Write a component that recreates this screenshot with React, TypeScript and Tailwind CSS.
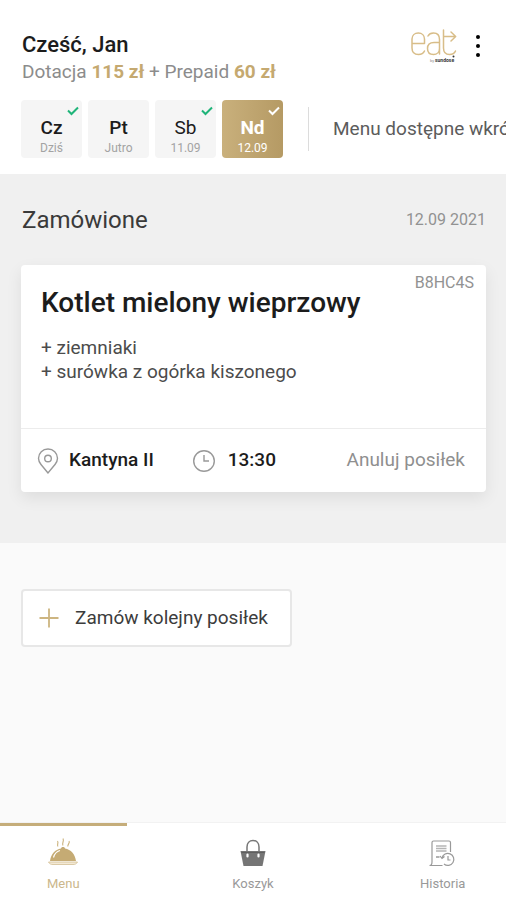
import { useState } from "react";
import clsx from "clsx";

const days = [
  { name: "Cz", date: "Dziś", ordered: true },
  { name: "Pt", date: "Jutro", ordered: false },
  { name: "Sb", date: "11.09", ordered: true },
  { name: "Nd", date: "12.09", ordered: true },
];

function Logo() {
  return (
    <svg viewBox="0 0 48 38" className="w-12 h-[38px]" fill="none" role="img" aria-label="eat">
      <g stroke="#d8bd88" strokeWidth="1.5" strokeLinecap="round" strokeLinejoin="round">
        <path d="M2 15.500H14.500V11C14.500 7.500 12 5 8.300 5S2 7.500 2 11V20C2 24 4.500 26.500 8.500 26.500C11.500 26.500 13.500 25.200 14.500 23" />
        <path d="M18 8C19 6 21 5 23.500 5C27.500 5 29.500 7.500 29.500 11.500V26M29.500 14.500H24C20 14.500 17.500 16.700 17.500 20.500S20 26.500 23.500 26.500S29.500 24 29.500 20.500" />
        <path d="M33.500 2V20C33.500 24 35.500 26.500 39.500 26.500C42.500 26.500 44.500 25.500 45.500 23M33.500 8.500H45.500M41 4L45.700 8.500L41 13" />
      </g>
      <circle cx="43.500" cy="28.500" r="1" fill="#333" />
      <text x="20" y="34" fontSize="4" fill="#888" fontFamily="Roboto, sans-serif">by</text>
      <text x="25" y="34" fontSize="5" fontWeight="700" fill="#333" fontFamily="Roboto, sans-serif">sundose</text>
    </svg>
  );
}

function Check({ className }: { className?: string }) {
  return (
    <svg viewBox="0 0 12 10" className={clsx("w-3 h-2.5", className)} fill="none" stroke="currentColor" strokeWidth="2">
      <path d="M1 4.500L4.500 8L11 1.500" />
    </svg>
  );
}

function PinIcon() {
  return (
    <svg viewBox="0 0 22 28" className="w-[22px] h-7" fill="none" stroke="#999" strokeWidth="1.400">
      <path d="M11 26L4 17.500C2.300 15.400 1.500 13.500 1.500 11.300C1.500 6 5.700 2 11 2S20.500 6 20.500 11.300C20.500 13.500 19.700 15.400 18 17.500Z" />
      <circle cx="11" cy="11.500" r="3.300" />
    </svg>
  );
}

function ClockIcon() {
  return (
    <svg viewBox="0 0 24 24" className="w-6 h-6" fill="none" stroke="#999" strokeWidth="1.400">
      <circle cx="12" cy="12" r="10.300" />
      <path d="M12 6V12H17" />
    </svg>
  );
}

function DishIcon() {
  return (
    <svg viewBox="0 0 32 30" className="w-8 h-[30px]" fill="none">
      <path d="M3 23C4 16 8 11.500 14 10.500C14 8.500 18 8.500 18 10.500C24 11.500 28 16 29 23Z" fill="#c5ab74" />
      <path d="M6.500 19.500C7.500 15.500 9.500 13.500 13 12.500" stroke="#fff" strokeWidth="1.200" />
      <path d="M1.500 24H30.500C29.500 26 28 26.500 26 26.500H6C4 26.500 2.500 26 1.500 24Z" fill="#f3e9d5" stroke="#d3bf94" strokeWidth="0.800" />
      <path d="M11 8.500C9.500 6.500 12 5 10.500 3M16 7.500C14.500 5 17.500 3.500 16 0.500M21 8.500C20 6.500 23.500 5 22 3" stroke="#cbb27c" strokeWidth="1.100" />
    </svg>
  );
}

function BasketIcon() {
  return (
    <svg viewBox="0 0 32 30" className="w-8 h-[30px]" fill="none">
      <path d="M10 18V9C10 5 12.500 2.500 16 2.500S22 5 22 9V18" stroke="#777" strokeWidth="1.500" />
      <path d="M3.500 13H28.500L25.500 28H6.500Z" fill="#757575" />
      <path d="M4.500 14.500H27.500" stroke="#5f5f5f" strokeWidth="1" />
      <path d="M10.500 16.500V18.500M21.500 16.500V18.500" stroke="#fff" strokeWidth="2.200" strokeLinecap="round" />
    </svg>
  );
}

function HistoryIcon() {
  return (
    <svg viewBox="0 0 32 30" className="w-8 h-[30px]" fill="none" stroke="#999" strokeWidth="1.200">
      <path d="M23.500 14V4.500C23.500 3.500 23 3 22 3H6.500C5.500 3 5 3.500 5 4.500V24C5 26 4.500 27.500 2.500 27.500H15.500" />
      <path d="M9 8H19.500M9 10.500H19.500M9 13H19.500" strokeWidth="1.500" stroke="#b5b5b5" />
      <path d="M9 19H12.500" strokeWidth="1.500" />
      <path d="M15 20A6 6 0 1 1 17 26M13 18L15 20.500L17.500 18.500" />
      <path d="M21 18V22H23.500" />
    </svg>
  );
}

const tabs = [
  { label: "Menu", Icon: DishIcon },
  { label: "Koszyk", Icon: BasketIcon },
  { label: "Historia", Icon: HistoryIcon },
];

export default function App() {
  const [day, setDay] = useState("Nd");
  const [tab, setTab] = useState("Menu");

  return (
    <div className="min-h-screen flex flex-col bg-[#fafafa] font-['Roboto',sans-serif] text-[#1c1c1c]">
      <header className="bg-white pt-8 pb-4 pl-[21px] overflow-hidden">
        <div className="flex items-start justify-between pr-[18px]">
          <div className="pl-px">
            <h1 className="text-[22px] leading-[26px] font-medium">Cześć, Jan</h1>
            <p className="text-[19px] leading-7 text-[#8c8c8c]">
              Dotacja <b className="font-bold text-[#c5a970]">115 zł</b> + Prepaid{" "}
              <b className="font-bold text-[#c5a970]">60 zł</b>
            </p>
          </div>
          <div className="flex items-start gap-2.5 -mt-1">
            <Logo />
            <button type="button" aria-label="Więcej" className="w-5 h-9 flex flex-col items-center justify-center gap-[5px]">
              <span className="w-1 h-1 rounded-full bg-black" />
              <span className="w-1 h-1 rounded-full bg-black" />
              <span className="w-1 h-1 rounded-full bg-black" />
            </button>
          </div>
        </div>

        <div className="mt-3.5 flex items-center">
          <div className="flex gap-1.5">
            {days.map(d => {
              const active = d.name === day;
              return (
                <button
                  key={d.name}
                  type="button"
                  aria-pressed={active}
                  onClick={() => setDay(d.name)}
                  className={clsx(
                    "relative w-[61px] h-[58px] rounded pt-4 flex flex-col items-center",
                    active ? "bg-linear-to-r from-[#c9b07c] to-[#b59a64] text-white" : "bg-[#f5f5f5]"
                  )}
                >
                  <span
                    className={clsx(
                      "text-[19px] leading-6",
                      active ? "font-bold" : d.name === "Sb" ? "font-normal" : "font-medium"
                    )}
                  >
                    {d.name}
                  </span>
                  <span className={clsx("text-xs leading-4", active ? "text-white" : "text-[#a3a3a3]")}>{d.date}</span>
                  {d.ordered && (
                    <Check className={clsx("absolute top-1.5 right-[3px]", active ? "text-white" : "text-[#1fb479]")} />
                  )}
                </button>
              );
            })}
          </div>
          <p className="ml-[25px] pl-6 h-11 shrink-0 border-l border-[#dcdcdc] flex items-center text-[19px] whitespace-nowrap text-[#5c5c5c]">
            Menu dostępne wkrótce
          </p>
        </div>
      </header>

      <section className="bg-[#f0f0f0] pl-[21px] pr-5 pt-7 pb-[51px]">
        <div className="flex items-center justify-between pl-px">
          <h2 className="text-2xl leading-9 text-[#3a3a3a]">Zamówione</h2>
          <time dateTime="2021-09-12" className="text-base text-[#929292]">12.09 2021</time>
        </div>

        <article className="mt-[27px] bg-white rounded shadow-[0_6px_16px_rgba(0,0,0,0.08)]">
          <div className="relative px-5 pt-5 pb-11">
            <span className="absolute top-1.5 right-3 text-base text-[#929292]">B8HC4S</span>
            <h3 className="text-[28px] leading-9 font-medium">Kotlet mielony wieprzowy</h3>
            <ul className="mt-[15px] text-[19px] leading-6 text-[#4c4c4c]">
              <li>+ ziemniaki</li>
              <li>+ surówka z ogórka kiszonego</li>
            </ul>
          </div>
          <div className="h-16 border-t border-[#ececec] flex items-center pl-4 pr-[21px]">
            <PinIcon />
            <span className="ml-2.5 text-[19px] font-medium">Kantyna II</span>
            <span className="ml-[38px] flex"><ClockIcon /></span>
            <time className="ml-3 text-[19px] font-medium">13:30</time>
            <button type="button" className="ml-auto text-[19px] text-[#8f8f8f]">Anuluj posiłek</button>
          </div>
        </article>
      </section>

      <main className="flex-1 pl-[21px] pr-5 pt-[46px]">
        <button type="button" className="h-[58px] pl-4 pr-[22px] flex items-center gap-4 bg-white rounded border-2 border-[#e7e7e7] text-[19px] text-[#3c3c3c]">
          <svg viewBox="0 0 20 20" className="w-5 h-5" stroke="#cdb581" strokeWidth="1.800">
            <path d="M10 0.500V19.500M0.500 10H19.500" />
          </svg>
          Zamów kolejny posiłek
        </button>
      </main>

      <nav className="bg-white border-t border-[#f2f2f2] flex justify-between">
        {tabs.map(({ label, Icon }) => (
          <button
            key={label}
            type="button"
            onClick={() => setTab(label)}
            className={clsx(
              "w-1/4 h-[77px] pt-3 border-t-3 flex flex-col items-center text-[13px]",
              tab === label ? "border-[#c5ad7a] text-[#cbb78c]" : "border-transparent text-[#999]"
            )}
          >
            <Icon />
            <span className="mt-1.5">{label}</span>
          </button>
        ))}
      </nav>
    </div>
  );
}
